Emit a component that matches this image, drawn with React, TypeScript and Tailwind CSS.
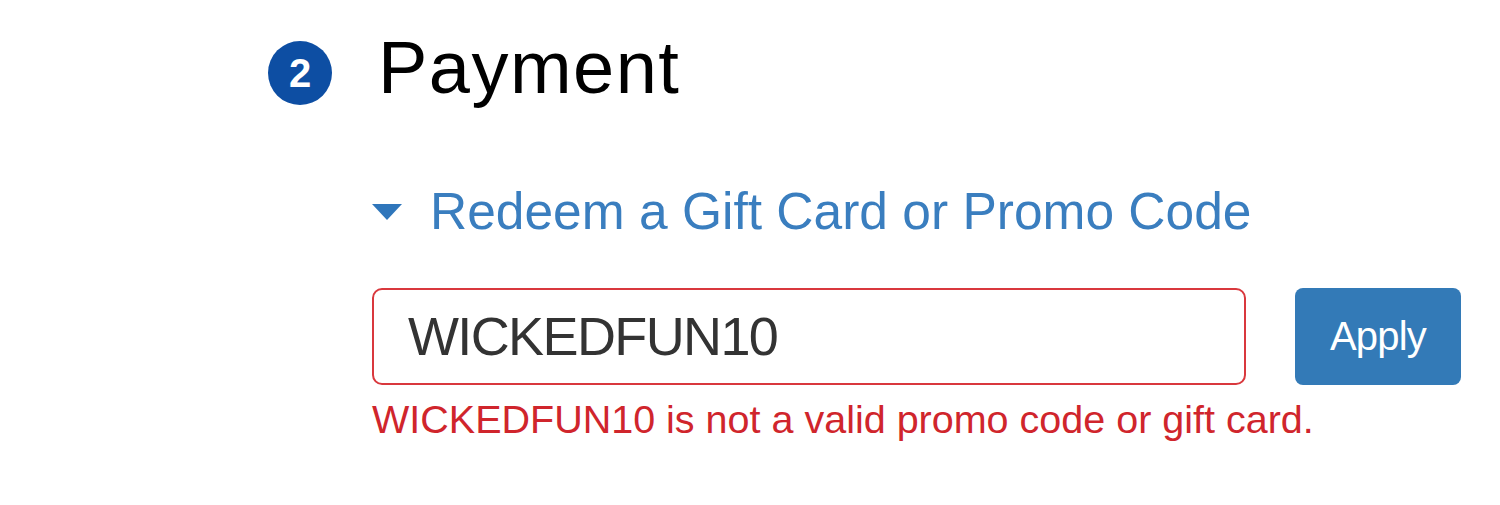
import React from "react";

const FONT = { fontFamily: '"Liberation Sans", Arial, sans-serif' };

export default function App() {
  return (
    <div className="min-h-screen bg-white pl-[268px] pt-[31px]" style={FONT}>
      {/* Step header */}
      <div className="flex items-start gap-[46px]">
        <div className="mt-[10px] flex h-[64px] w-[64px] items-center justify-center rounded-full bg-[#0d4ea3] text-[40px] font-bold leading-none text-white">
          2
        </div>
        <h2 className="text-[74px] leading-none tracking-[0.02em] text-black">Payment</h2>
      </div>

      <div className="ml-[104px]">
        {/* Toggle */}
        <div className="mt-[81px] flex items-center gap-[28px]">
          <svg width="30" height="16" viewBox="0 0 30 16">
            <polygon points="0,0 30,0 15,16" fill="#2f76bb" />
          </svg>
          <span className="text-[51.5px] leading-none text-[#3a7ebf]">
            Redeem a Gift Card or Promo Code
          </span>
        </div>

        {/* Code field */}
        <div className="mt-[50px] flex items-center gap-[49px]">
          <input
            readOnly
            value="WICKEDFUN10"
            className="h-[97px] w-[874px] rounded-[10px] border-2 border-[#d9383d] bg-white pl-[34px] text-[54px] tracking-[-0.03em] text-[#333] outline-none"
            style={FONT}
          />
          <button className="h-[97px] w-[166px] rounded-[8px] bg-[#337ab7] text-[40px] tracking-[-0.02em] text-white">
            Apply
          </button>
        </div>

        <p className="mt-[15px] text-[39.5px] leading-none text-[#d0252c]">
          WICKEDFUN10 is not a valid promo code or gift card.
        </p>
      </div>
    </div>
  );
}
